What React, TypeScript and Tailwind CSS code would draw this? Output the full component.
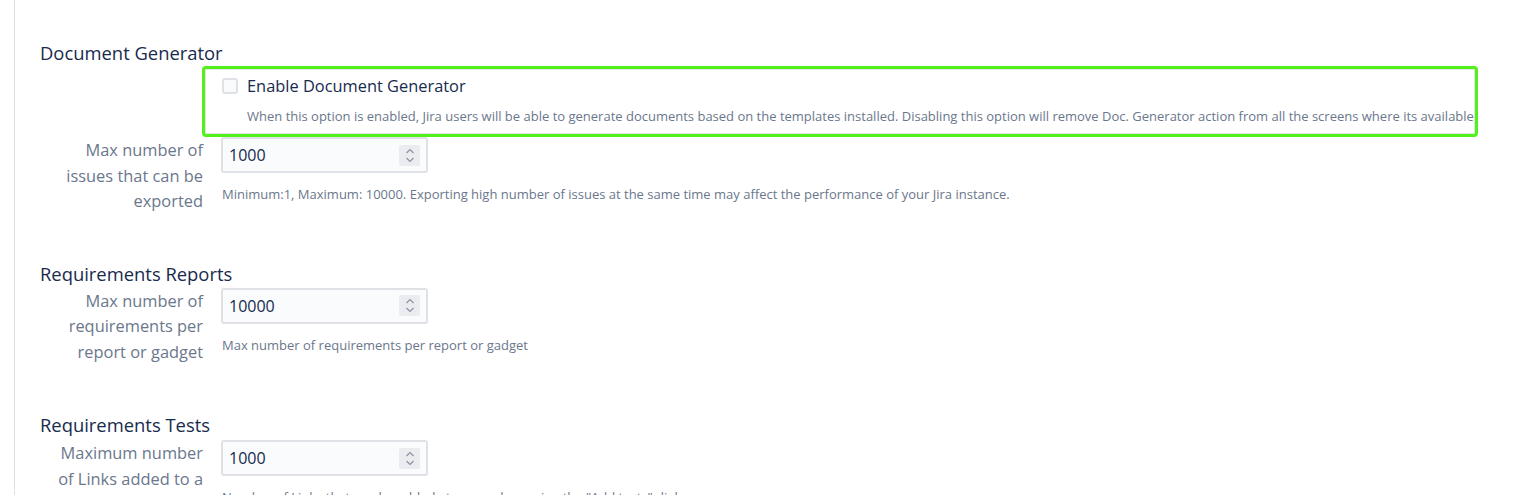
import React from 'react';

const font = { fontFamily: '"Open Sans", "Noto Sans", sans-serif' };

function Spinner() {
  return (
    <div className="w-[21px] h-[21px] bg-[#ebecf0] rounded-[2px] flex flex-col items-center justify-center gap-[3px]">
      <svg width="10" height="6" viewBox="0 0 10 6" fill="none">
        <path d="M1.5 5 L5 1.5 L8.5 5" stroke="#8993a4" strokeWidth="1.2" />
      </svg>
      <svg width="10" height="6" viewBox="0 0 10 6" fill="none">
        <path d="M1.5 1 L5 4.5 L8.5 1" stroke="#8993a4" strokeWidth="1.2" />
      </svg>
    </div>
  );
}

interface FieldProps {
  label: React.ReactNode;
  value: string;
  help: string;
}

function NumberField({ label, value, help }: FieldProps) {
  return (
    <div className="flex items-start">
      <div className="ml-[13px] w-[150px] shrink-0 text-right text-[16.4px] leading-[25.5px] text-[#6b778c]">{label}</div>
      <div className="ml-[18px]">
        <div className="w-[207px] h-[36px] border-2 border-[#dfe1e6] bg-[#fafbfc] rounded-[3px] flex items-center justify-between pl-[6px] pr-[6px]">
          <span className="text-[16px] text-[#172b4d]">{value}</span>
          <Spinner />
        </div>
        <p className="mt-[13px] ml-px text-[13px] leading-[16px] text-[#6b778c] whitespace-nowrap">{help}</p>
      </div>
    </div>
  );
}

function SectionTitle({ children }: { children: React.ReactNode }) {
  return <h3 className="text-[18.4px] leading-[26px] text-[#172b4d] font-normal">{children}</h3>;
}

export default function App() {
  return (
    <div className="w-full h-[495px] bg-white overflow-hidden" style={font}>
      <div className="ml-[14px] h-full border-l border-[#dfe1e6] pl-[25px] pt-[40px]">
        <SectionTitle>Document Generator</SectionTitle>

        <div className="ml-[162px] w-[1276px] h-[71px] border-[3px] border-[#52f11a] rounded-[4px] shadow-[inset_0_0_0_1px_#e4e4e4] overflow-hidden pl-[17px] pt-[6px]">
          <div className="flex items-center gap-[9px] h-[22px]">
            <span className="w-[16px] h-[16px] border-2 border-[#dfe1e6] bg-[#fafbfc] rounded-[3px] shrink-0" />
            <span className="text-[16.4px] text-[#172b4d]">Enable Document Generator</span>
          </div>
          <p className="mt-[10px] ml-[25px] text-[13px] leading-[18px] text-[#6b778c] whitespace-nowrap">
            When this option is enabled, Jira users will be able to generate documents based on the templates installed. Disabling this option will remove Doc. Generator action from all the screens where its available
          </p>
        </div>

        <NumberField
          label={<>Max number of issues that can be exported</>}
          value="1000"
          help="Minimum:1, Maximum: 10000. Exporting high number of issues at the same time may affect the performance of your Jira instance."
        />

        <div className="mt-[47px]">
          <SectionTitle>Requirements Reports</SectionTitle>
        </div>
        <div className="mt-px">
          <NumberField
            label={<>Max number of requirements per report or gadget</>}
            value="10000"
            help="Max number of requirements per report or gadget"
          />
        </div>

        <div className="mt-[48px]">
          <SectionTitle>Requirements Tests</SectionTitle>
        </div>
        <div className="mt-[2px]">
          <NumberField
            label={<>Maximum number of Links added to a single time</>}
            value="1000"
            help={'Number of Links that can be added at once, when using the "Add tests" dialog'}
          />
        </div>
      </div>
    </div>
  );
}
